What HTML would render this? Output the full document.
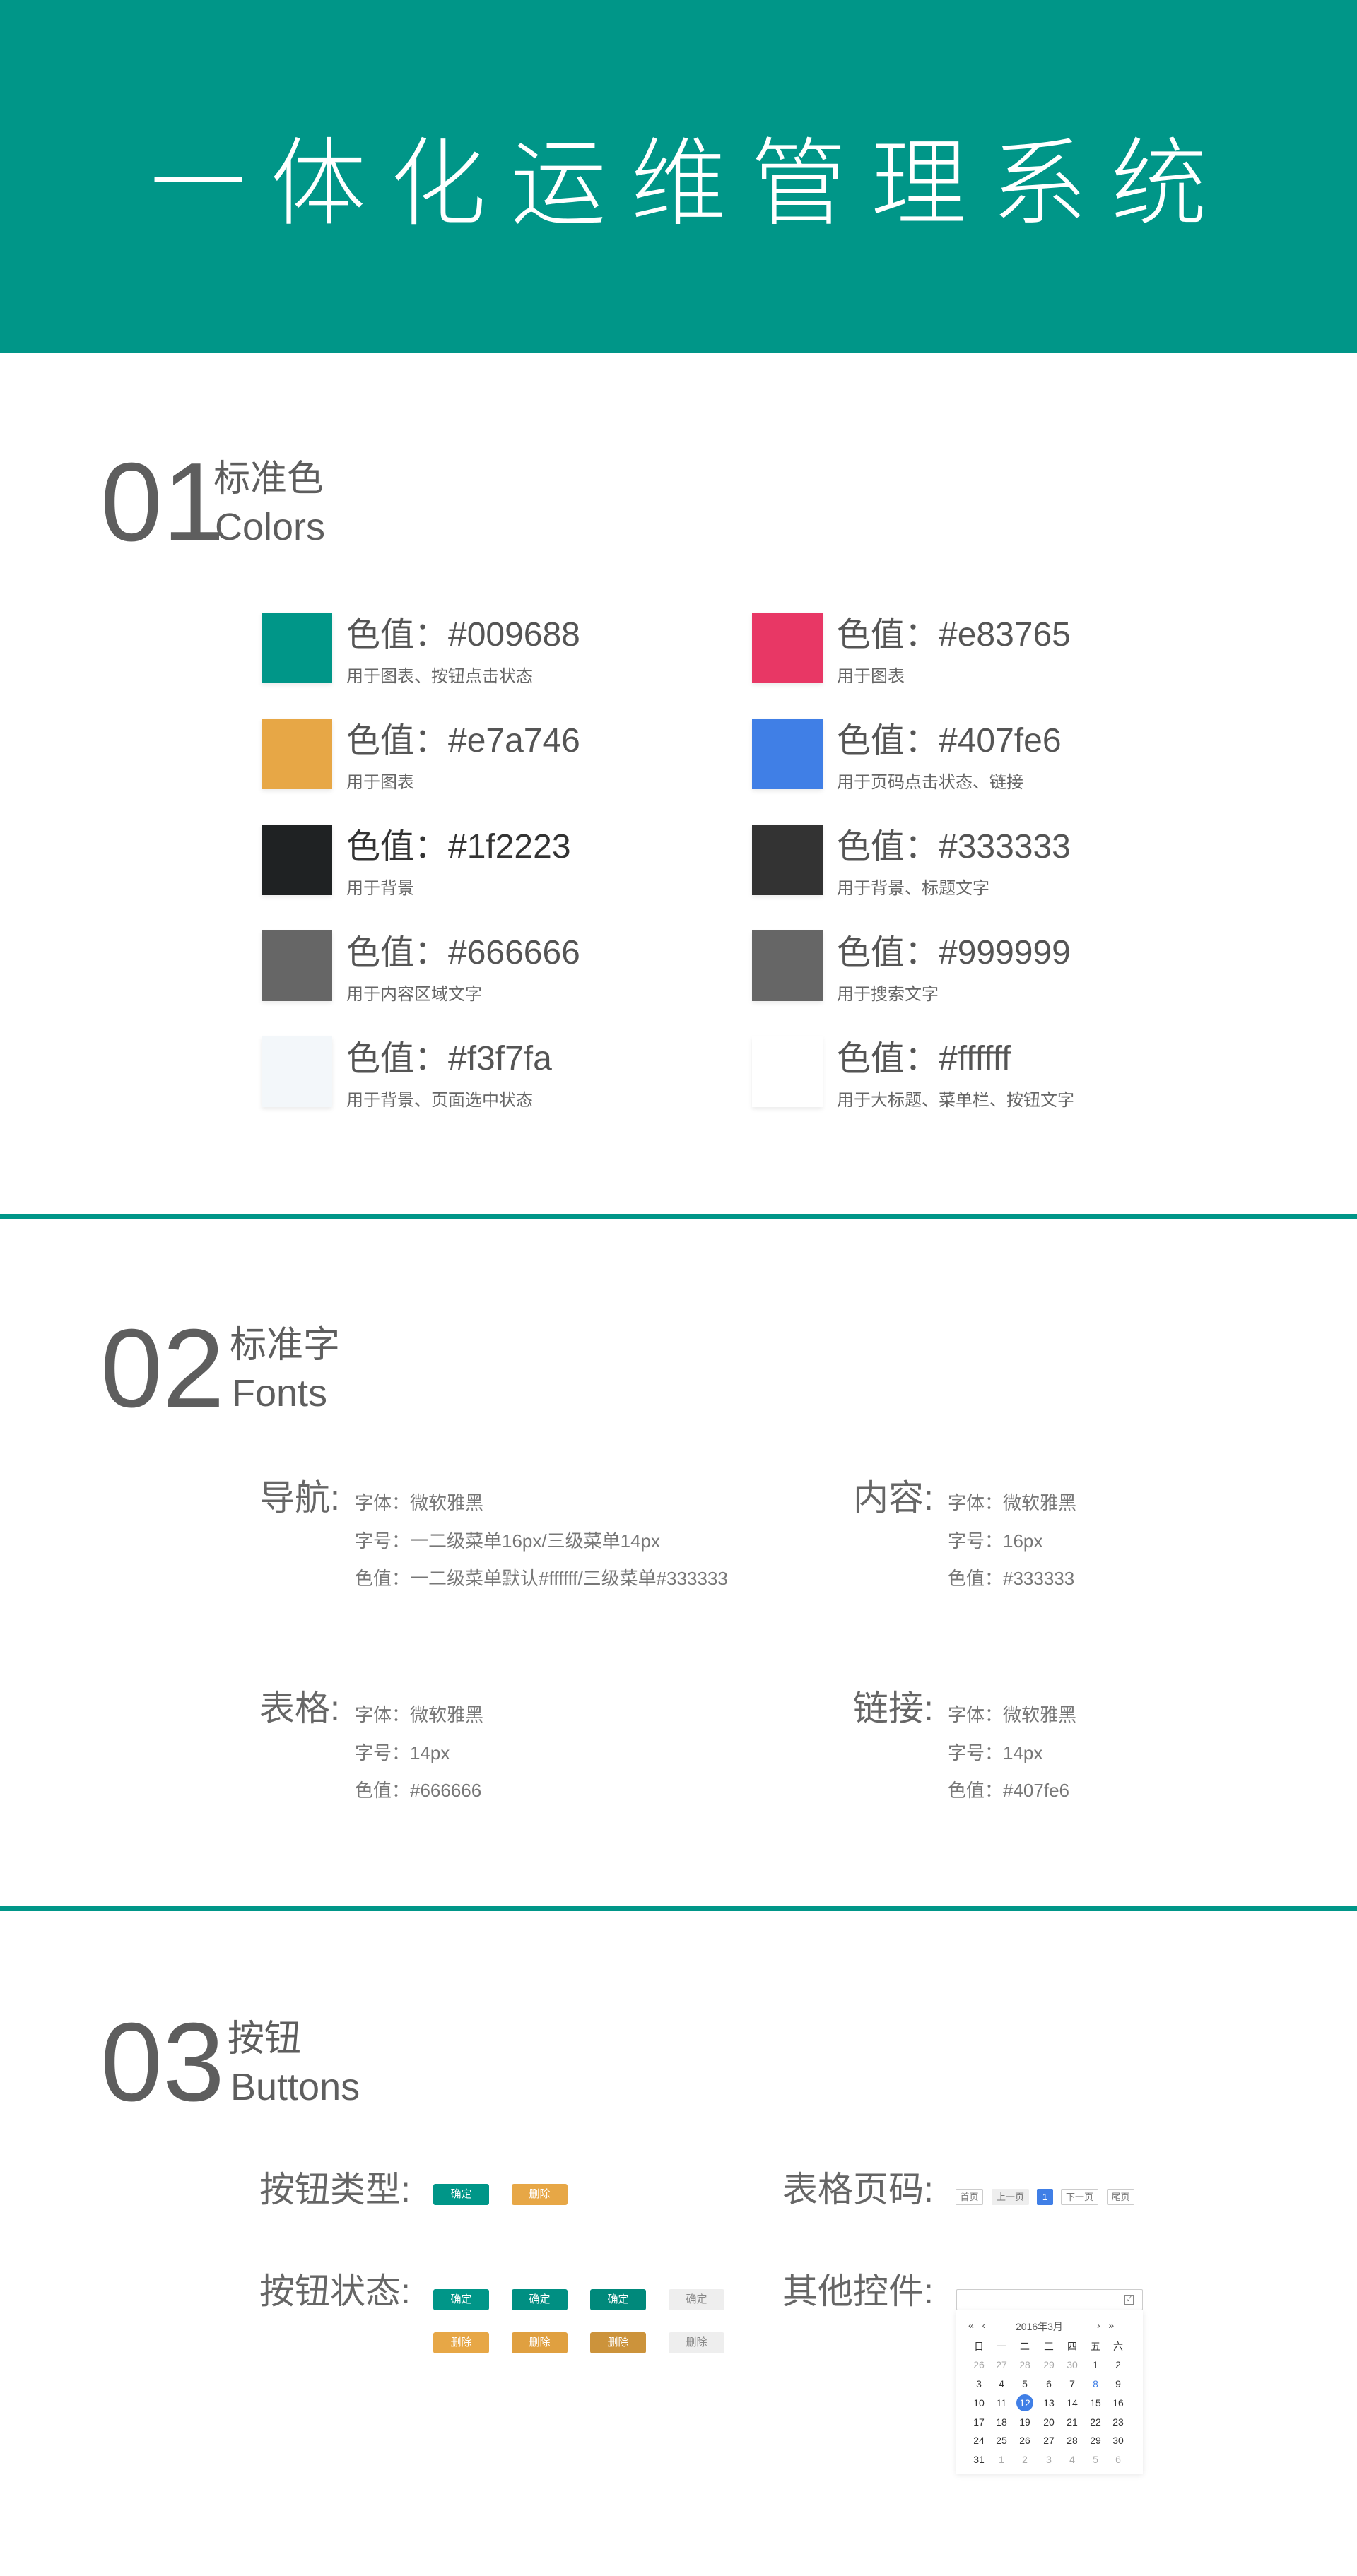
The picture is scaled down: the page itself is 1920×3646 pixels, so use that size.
<!DOCTYPE html>
<html><head><meta charset="utf-8"><style>
*{margin:0;padding:0;box-sizing:border-box}
body{width:1920px;height:3646px;background:#fff;position:relative;font-family:"Liberation Sans","Noto Sans CJK SC",sans-serif;color:#666;overflow:hidden}
.a{position:absolute;white-space:nowrap}
.hd{position:absolute;left:0;top:0;width:1920px;height:500px;background:#009688}
.title{position:absolute;left:0;width:1920px;top:185px;text-align:center;color:#fff;font-size:136px;line-height:150px;letter-spacing:34px;padding-left:34px;font-weight:300}
.num{font-size:158px;line-height:158px;color:#5e5e5e}
.cn{font-size:52px;line-height:56px;color:#5e5e5e}
.en{font-size:54px;line-height:56px;color:#5e5e5e}
.sw{position:absolute;width:100px;height:100px;box-shadow:0 3px 6px rgba(0,0,0,.08)}
.st{font-size:48px;line-height:50px;color:#555}
.ss{font-size:24px;line-height:26px;color:#666}
.line{position:absolute;left:0;width:1920px;height:7px;background:#009688}
.fl{font-size:50px;line-height:54px;color:#666}
.fi{font-size:26px;line-height:28px;color:#777}
.btn{position:absolute;width:79px;height:30px;border-radius:3px;color:#fff;font-size:15px;line-height:30px;text-align:center}
.pg{position:absolute;height:23px;top:3098px;font-size:13px;line-height:21px;text-align:center;border:1px solid #ccc;border-radius:2px;color:#777;background:#fff}
.cal{position:absolute;font-size:14px;width:30px;text-align:center;line-height:20px;color:#333}
.g{color:#aaa}
</style></head><body>
<div class="hd"></div>
<div class="title">一体化运维管理系统</div>

<div class="a num" style="left:142px;top:632px">01</div>
<div class="a cn" style="left:302px;top:650px">标准色</div>
<div class="a en" style="left:304px;top:718px">Colors</div>

<div class="sw" style="left:370px;top:867px;background:#009688"></div>
<div class="a st" style="left:490px;top:874px">色值：#009688</div>
<div class="a ss" style="left:490px;top:945px">用于图表、按钮点击状态</div>
<div class="sw" style="left:1064px;top:867px;background:#e83765"></div>
<div class="a st" style="left:1184px;top:874px">色值：#e83765</div>
<div class="a ss" style="left:1184px;top:945px">用于图表</div>

<div class="sw" style="left:370px;top:1017px;background:#e7a746"></div>
<div class="a st" style="left:490px;top:1024px">色值：#e7a746</div>
<div class="a ss" style="left:490px;top:1095px">用于图表</div>
<div class="sw" style="left:1064px;top:1017px;background:#407fe6"></div>
<div class="a st" style="left:1184px;top:1024px">色值：#407fe6</div>
<div class="a ss" style="left:1184px;top:1095px">用于页码点击状态、链接</div>

<div class="sw" style="left:370px;top:1167px;background:#1f2223"></div>
<div class="a st" style="left:490px;top:1174px;color:#333">色值：#1f2223</div>
<div class="a ss" style="left:490px;top:1245px">用于背景</div>
<div class="sw" style="left:1064px;top:1167px;background:#333333"></div>
<div class="a st" style="left:1184px;top:1174px">色值：#333333</div>
<div class="a ss" style="left:1184px;top:1245px">用于背景、标题文字</div>

<div class="sw" style="left:370px;top:1317px;background:#666666"></div>
<div class="a st" style="left:490px;top:1324px">色值：#666666</div>
<div class="a ss" style="left:490px;top:1395px">用于内容区域文字</div>
<div class="sw" style="left:1064px;top:1317px;background:#666666"></div>
<div class="a st" style="left:1184px;top:1324px">色值：#999999</div>
<div class="a ss" style="left:1184px;top:1395px">用于搜索文字</div>

<div class="sw" style="left:370px;top:1467px;background:#f3f7fa"></div>
<div class="a st" style="left:490px;top:1474px">色值：#f3f7fa</div>
<div class="a ss" style="left:490px;top:1545px">用于背景、页面选中状态</div>
<div class="sw" style="left:1064px;top:1467px;background:#ffffff"></div>
<div class="a st" style="left:1184px;top:1474px">色值：#ffffff</div>
<div class="a ss" style="left:1184px;top:1545px">用于大标题、菜单栏、按钮文字</div>

<div class="line" style="top:1718px"></div>

<div class="a num" style="left:142px;top:1858px">02</div>
<div class="a cn" style="left:325px;top:1876px">标准字</div>
<div class="a en" style="left:328px;top:1944px">Fonts</div>

<div class="a fl" style="left:367px;top:2093px">导航:</div>
<div class="a fi" style="left:502px;top:2113px">字体：微软雅黑</div>
<div class="a fi" style="left:502px;top:2167px">字号：一二级菜单16px/三级菜单14px</div>
<div class="a fi" style="left:502px;top:2220px">色值：一二级菜单默认#ffffff/三级菜单#333333</div>

<div class="a fl" style="left:1207px;top:2093px">内容:</div>
<div class="a fi" style="left:1341px;top:2113px">字体：微软雅黑</div>
<div class="a fi" style="left:1341px;top:2167px">字号：16px</div>
<div class="a fi" style="left:1341px;top:2220px">色值：#333333</div>

<div class="a fl" style="left:367px;top:2391px">表格:</div>
<div class="a fi" style="left:502px;top:2413px">字体：微软雅黑</div>
<div class="a fi" style="left:502px;top:2467px">字号：14px</div>
<div class="a fi" style="left:502px;top:2520px">色值：#666666</div>

<div class="a fl" style="left:1207px;top:2391px">链接:</div>
<div class="a fi" style="left:1341px;top:2413px">字体：微软雅黑</div>
<div class="a fi" style="left:1341px;top:2467px">字号：14px</div>
<div class="a fi" style="left:1341px;top:2520px">色值：#407fe6</div>

<div class="line" style="top:2698px"></div>

<div class="a num" style="left:142px;top:2840px">03</div>
<div class="a cn" style="left:322px;top:2858px">按钮</div>
<div class="a en" style="left:326px;top:2926px">Buttons</div>

<div class="a fl" style="left:367px;top:3072px">按钮类型:</div>
<div class="btn" style="left:613px;top:3091px;background:#009688">确定</div>
<div class="btn" style="left:724px;top:3091px;background:#e7a746">删除</div>

<div class="a fl" style="left:367px;top:3216px">按钮状态:</div>
<div class="btn" style="left:613px;top:3240px;background:#009688">确定</div>
<div class="btn" style="left:724px;top:3240px;background:#008f82">确定</div>
<div class="btn" style="left:835px;top:3240px;background:#00897b">确定</div>
<div class="btn" style="left:946px;top:3240px;background:#eeeeee;color:#888">确定</div>
<div class="btn" style="left:613px;top:3301px;background:#e7a746">删除</div>
<div class="btn" style="left:724px;top:3301px;background:#e0a040">删除</div>
<div class="btn" style="left:835px;top:3301px;background:#cc933b">删除</div>
<div class="btn" style="left:946px;top:3301px;background:#eeeeee;color:#888">删除</div>

<div class="a fl" style="left:1107px;top:3072px">表格页码:</div>
<div class="pg" style="left:1352px;width:39px">首页</div>
<div class="pg" style="left:1403px;width:53px;background:#eee;border-color:#eee">上一页</div>
<div class="pg" style="left:1467px;width:23px;background:#407fe6;border-color:#407fe6;color:#fff">1</div>
<div class="pg" style="left:1501px;width:53px">下一页</div>
<div class="pg" style="left:1566px;width:39px">尾页</div>

<div class="a fl" style="left:1107px;top:3216px">其他控件:</div>
<div class="a" style="left:1353px;top:3240px;width:264px;height:30px;border:1px solid #ccc;border-radius:2px"></div>
<div class="a" style="left:1591px;top:3248px;width:13px;height:14px;border:1px solid #888;font-size:10px;line-height:12px;text-align:center;color:#666">✓</div>
<div class="a" style="left:1353px;top:3270px;width:264px;height:231px;background:#fff;box-shadow:0 2px 8px rgba(0,0,0,.1)"></div>
<div class="a" style="left:1370px;top:3283px;font-size:14px;color:#555">«&nbsp;&nbsp;&nbsp;‹</div>
<div class="a" style="left:1437px;top:3283px;font-size:14px;color:#555">2016年3月</div>
<div class="a" style="left:1552px;top:3283px;font-size:14px;color:#555">›&nbsp;&nbsp;&nbsp;»</div>
<div id="cal"></div>
<script>
var xs=[1370,1402,1435,1469,1502,1535,1567];
var rows=[["日","一","二","三","四","五","六"],["26","27","28","29","30","1","2"],["3","4","5","6","7","8","9"],["10","11","12","13","14","15","16"],["17","18","19","20","21","22","23"],["24","25","26","27","28","29","30"],["31","1","2","3","4","5","6"]];
var ys=[3311,3337,3364,3391,3418,3444,3471];var h="";
for(var r=0;r<7;r++)for(var c=0;c<7;c++){var cls="cal";var st="left:"+xs[c]+"px;top:"+ys[r]+"px;";
if(r==1&&c<5||r==6&&c>0)cls+=" g";
if(r==2&&c==5)st+="color:#407fe6;";
if(r==3&&c==2)st+="background:#407fe6;color:#fff;border-radius:50%;width:24px;height:24px;line-height:24px;margin-left:3px;margin-top:-2px;";
h+='<div class="'+cls+'" style="'+st+'">'+rows[r][c]+'</div>';}
document.getElementById("cal").innerHTML=h;
</script>
</body></html>
